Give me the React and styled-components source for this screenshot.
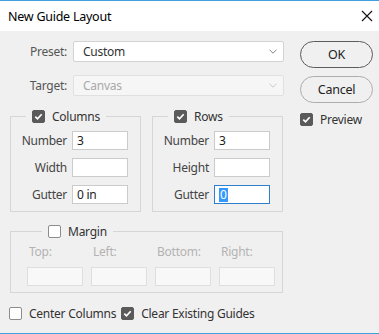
import React from "react";
import styled, { createGlobalStyle } from "styled-components";

const Global = createGlobalStyle`
  html, body { margin: 0; padding: 0; background: #f0f0f0; }
  body { font-family: "Noto Sans", "Open Sans", sans-serif; font-size: 12px; letter-spacing: -0.25px; color: #333; }
  * { box-sizing: border-box; }
`;

const Window = styled.div`
  width: 379px;
  height: 334px;
  border-top: 1px solid #41a0dc;
  border-bottom: 1px solid #41a0dc;
  background: #f0f0f0;
  display: flex;
  flex-direction: column;
`;

const TitleBar = styled.div`
  height: 30px;
  background: #fff;
  display: flex;
  align-items: center;
  justify-content: space-between;
  padding: 0 6px 0 8px;
  font-size: 12.5px;
  color: #000;
`;

const Body = styled.div`
  flex: 1;
  display: flex;
  gap: 16px;
  padding: 10px 0 0 10px;
`;

const LeftCol = styled.div`
  width: 274px;
  display: flex;
  flex-direction: column;
`;

const RightCol = styled.div`
  width: 73px;
  display: flex;
  flex-direction: column;
`;

const FieldRow = styled.div`
  display: grid;
  grid-template-columns: 57px 211px;
  column-gap: 6px;
  align-items: center;
  margin-top: ${(p) => p.$top || 0}px;
`;

const RowLabel = styled.span`
  text-align: right;
  color: #555;
`;

const Select = styled.div`
  height: 21px;
  background: ${(p) => (p.$disabled ? "#f6f6f6" : "#fff")};
  border: 1px solid ${(p) => (p.$disabled ? "#e0e0e0" : "#d3d3d3")};
  border-radius: 2px;
  display: flex;
  align-items: center;
  justify-content: space-between;
  padding: 0 6px 0 9px;
  color: ${(p) => (p.$disabled ? "#a9a9a9" : "#333")};
`;

const Groups = styled.div`
  display: flex;
  gap: 11px;
  margin-top: 12px;
`;

const Group = styled.fieldset`
  margin: 0;
  padding: 7px 0 ${(p) => p.$bottom || 0}px ${(p) => p.$left || 0}px;
  border: 1px solid #d6d6d6;
  width: ${(p) => p.$width}px;
  min-width: 0;
`;

const Legend = styled.legend`
  margin-left: 15px;
  padding: 0 6px;
  height: 16px;
  display: flex;
  align-items: center;
  gap: 7px;
  color: #333;
`;

const Grid = styled.div`
  display: grid;
  grid-template-columns: 56px 56px;
  column-gap: 5px;
  row-gap: 8px;
  align-items: center;
`;

const GridLabel = styled.span`
  text-align: right;
  color: #444;
`;

const Input = styled.div`
  height: 19px;
  width: 56px;
  background: ${(p) => (p.$disabled ? "#f8f8f8" : "#fff")};
  border: 1px solid ${(p) => (p.$focus ? "#2f7fce" : p.$disabled ? "#dedede" : "#cbcbcb")};
  display: flex;
  align-items: center;
  padding-left: 4px;
  color: #222;
`;

const Selected = styled.span`
  background: #3399ff;
  color: #fff;
  line-height: 14px;
  padding: 0 1px;
`;

const MarginGroup = styled(Group)`
  margin-top: 11px;
  padding-top: 5px;
`;

const MarginGrid = styled.div`
  display: grid;
  grid-template-columns: repeat(4, 56px);
  column-gap: 8px;
  row-gap: 7px;
`;

const MarginLabel = styled.span`
  color: #b3b3b3;
  padding-left: 2px;
  line-height: 16px;
`;

const BottomRow = styled.div`
  display: flex;
  align-items: center;
  margin: 12px 0 0 -1px;
  white-space: nowrap;
`;

const CheckLabel = styled.label`
  display: flex;
  align-items: center;
  gap: ${(p) => p.$gap || 7}px;
  margin-right: ${(p) => p.$mr || 0}px;
  color: #333;
`;

const Box = styled.span`
  width: 13px;
  height: 13px;
  border-radius: 2px;
  flex: none;
  display: inline-flex;
  align-items: center;
  justify-content: center;
  background: ${(p) => (p.$checked ? "#5a5a5a" : "#fff")};
  border: 1px solid ${(p) => (p.$checked ? "#5a5a5a" : "#8c8c8c")};
`;

const Button = styled.div`
  height: 27px;
  border-radius: 14px;
  border: 1px solid ${(p) => (p.$primary ? "#5c5c5c" : "#adadad")};
  display: flex;
  align-items: center;
  justify-content: center;
  color: #222;
  font-size: 12.5px;
  margin-top: ${(p) => p.$top || 0}px;
`;

const PreviewRow = styled.div`
  margin-top: 8px;
`;

const Check = ({ checked }) => (
  <Box $checked={checked}>
    {checked && (
      <svg width="9" height="9" viewBox="0 0 9 9">
        <path d="M1.3 4.6 L3.5 6.8 L7.7 2.2" fill="none" stroke="#fff" strokeWidth="1.7" />
      </svg>
    )}
  </Box>
);

const Chevron = ({ color }) => (
  <svg width="8" height="5" viewBox="0 0 8 5">
    <path d="M0.5 0.8 L4 4.2 L7.5 0.8" fill="none" stroke={color} strokeWidth="0.9" />
  </svg>
);

const CloseIcon = () => (
  <svg width="12" height="12" viewBox="0 0 12 12">
    <path d="M1 1 L11 11 M11 1 L1 11" stroke="#111" strokeWidth="1.1" />
  </svg>
);

export default function App() {
  return (
    <>
      <Global />
      <Window>
        <TitleBar>
          <span>New Guide Layout</span>
          <CloseIcon />
        </TitleBar>
        <Body>
          <LeftCol>
            <FieldRow>
              <RowLabel>Preset:</RowLabel>
              <Select>
                <span>Custom</span>
                <Chevron color="#777" />
              </Select>
            </FieldRow>
            <FieldRow $top={13}>
              <RowLabel>Target:</RowLabel>
              <Select $disabled>
                <span>Canvas</span>
                <Chevron color="#c4c4c4" />
              </Select>
            </FieldRow>
            <Groups>
              <Group $width={131} $bottom={7}>
                <Legend>
                  <Check checked />
                  Columns
                </Legend>
                <Grid>
                  <GridLabel>Number</GridLabel>
                  <Input>3</Input>
                  <GridLabel>Width</GridLabel>
                  <Input />
                  <GridLabel>Gutter</GridLabel>
                  <Input>0 in</Input>
                </Grid>
              </Group>
              <Group $width={131} $bottom={7}>
                <Legend>
                  <Check checked />
                  Rows
                </Legend>
                <Grid>
                  <GridLabel>Number</GridLabel>
                  <Input>3</Input>
                  <GridLabel>Height</GridLabel>
                  <Input />
                  <GridLabel>Gutter</GridLabel>
                  <Input $focus>
                    <Selected>0</Selected>
                  </Input>
                </Grid>
              </Group>
            </Groups>
            <MarginGroup $width={273} $left={16} $bottom={6}>
              <Legend>
                <Check />
                Margin
              </Legend>
              <MarginGrid>
                <MarginLabel>Top:</MarginLabel>
                <MarginLabel>Left:</MarginLabel>
                <MarginLabel>Bottom:</MarginLabel>
                <MarginLabel>Right:</MarginLabel>
                <Input $disabled />
                <Input $disabled />
                <Input $disabled />
                <Input $disabled />
              </MarginGrid>
            </MarginGroup>
            <BottomRow>
              <CheckLabel $mr={5}>
                <Check />
                Center Columns
              </CheckLabel>
              <CheckLabel>
                <Check checked />
                Clear Existing Guides
              </CheckLabel>
            </BottomRow>
          </LeftCol>
          <RightCol>
            <Button $primary>OK</Button>
            <Button $top={8}>Cancel</Button>
            <PreviewRow>
              <CheckLabel>
                <Check checked />
                Preview
              </CheckLabel>
            </PreviewRow>
          </RightCol>
        </Body>
      </Window>
    </>
  );
}
